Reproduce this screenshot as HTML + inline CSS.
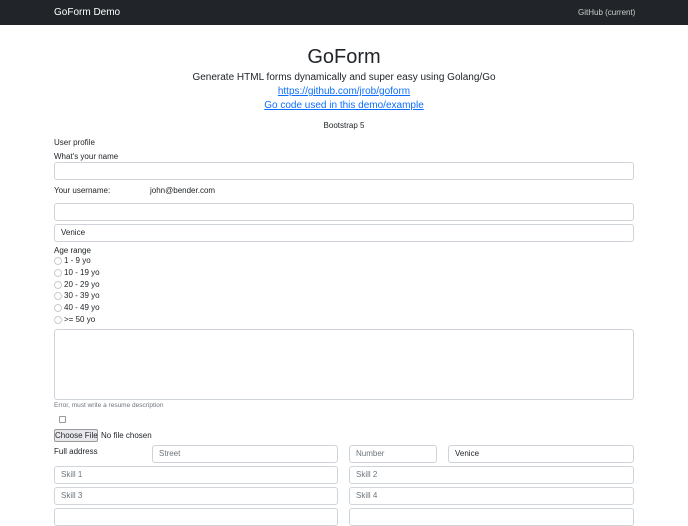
<!DOCTYPE html><html><head><style>
body{margin:0;width:688px;height:512px;overflow:hidden;background:#fff;font-family:"Liberation Sans",sans-serif;color:#212529;position:relative}
.a{position:absolute;white-space:nowrap}
.nav{position:absolute;left:0;top:0;width:688px;height:25px;background:#212529}
.in{position:absolute;border:1px solid #ced4da;border-radius:3px;box-sizing:border-box;height:18px;font-size:8px;padding-left:6px;line-height:16px;color:#212529}
.ph{color:#6c757d}
.r{position:absolute;left:54px;width:6px;height:6px;border:1px solid #ccc;border-radius:50%}
.rl{position:absolute;left:64px;font-size:8px}
a{color:#0d6efd;text-decoration:underline}
</style></head><body>
<div class="nav"></div>
<div class="a" style="left:54px;top:7px;color:#fff;font-size:10px">GoForm Demo</div>
<div class="a" style="left:578px;top:8px;color:#ccc;font-size:8px">GitHub (current)</div>
<div class="a" style="left:0;width:688px;text-align:center;top:46px;font-size:20px">GoForm</div>
<div class="a" style="left:0;width:688px;text-align:center;top:72px;font-size:10px">Generate HTML forms dynamically and super easy using Golang/Go</div>
<div class="a" style="left:0;width:688px;text-align:center;top:86px;font-size:10px"><a>https://github.com/jrob/goform</a></div>
<div class="a" style="left:0;width:688px;text-align:center;top:100px;font-size:10px"><a>Go code used in this demo/example</a></div>
<div class="a" style="left:0;width:688px;text-align:center;top:121px;font-size:8px">Bootstrap 5</div>
<div class="a" style="left:54px;top:138px;font-size:8px">User profile</div>
<div class="a" style="left:54px;top:152px;font-size:8px">What's your name</div>
<div class="in" style="left:54px;top:162px;width:580px"></div>
<div class="a" style="left:54px;top:186px;font-size:8px">Your username:</div>
<div class="a" style="left:150px;top:186px;font-size:8px">john@bender.com</div>
<div class="in" style="left:54px;top:203px;width:580px"></div>
<div class="in" style="left:54px;top:224px;width:580px">Venice</div>
<div class="a" style="left:54px;top:246px;font-size:8px">Age range</div>
<div class="r" style="top:257px"></div><div class="rl" style="top:256px">1 - 9 yo</div>
<div class="r" style="top:269px"></div><div class="rl" style="top:268px">10 - 19 yo</div>
<div class="r" style="top:281px"></div><div class="rl" style="top:280px">20 - 29 yo</div>
<div class="r" style="top:292px"></div><div class="rl" style="top:291px">30 - 39 yo</div>
<div class="r" style="top:304px"></div><div class="rl" style="top:303px">40 - 49 yo</div>
<div class="r" style="top:316px"></div><div class="rl" style="top:315px">&gt;= 50 yo</div>
<div class="in" style="left:54px;top:329px;width:580px;height:71px"></div>
<div class="a" style="left:54px;top:402px;font-size:6.5px;color:#6c757d">Error, must write a resume description</div>
<div class="a" style="left:59px;top:416px;width:5px;height:5px;border:1px solid #999;border-radius:1px"></div>
<div class="a" style="left:54px;top:429px;width:44px;height:13px;background:#e9e9ed;border:1px solid #999;border-radius:2px;box-sizing:border-box;font-size:8px;text-align:center;line-height:11px">Choose File</div>
<div class="a" style="left:101px;top:431px;font-size:8px">No file chosen</div>
<div class="a" style="left:54px;top:447px;font-size:8px">Full address</div>
<div class="in ph" style="left:152px;top:445px;width:186px">Street</div>
<div class="in ph" style="left:349px;top:445px;width:88px">Number</div>
<div class="in" style="left:448px;top:445px;width:186px">Venice</div>
<div class="in ph" style="left:54px;top:466px;width:284px">Skill 1</div>
<div class="in ph" style="left:349px;top:466px;width:285px">Skill 2</div>
<div class="in ph" style="left:54px;top:487px;width:284px">Skill 3</div>
<div class="in ph" style="left:349px;top:487px;width:285px">Skill 4</div>
<div class="in" style="left:54px;top:508px;width:284px"></div>
<div class="in" style="left:349px;top:508px;width:285px"></div>
</body></html>
